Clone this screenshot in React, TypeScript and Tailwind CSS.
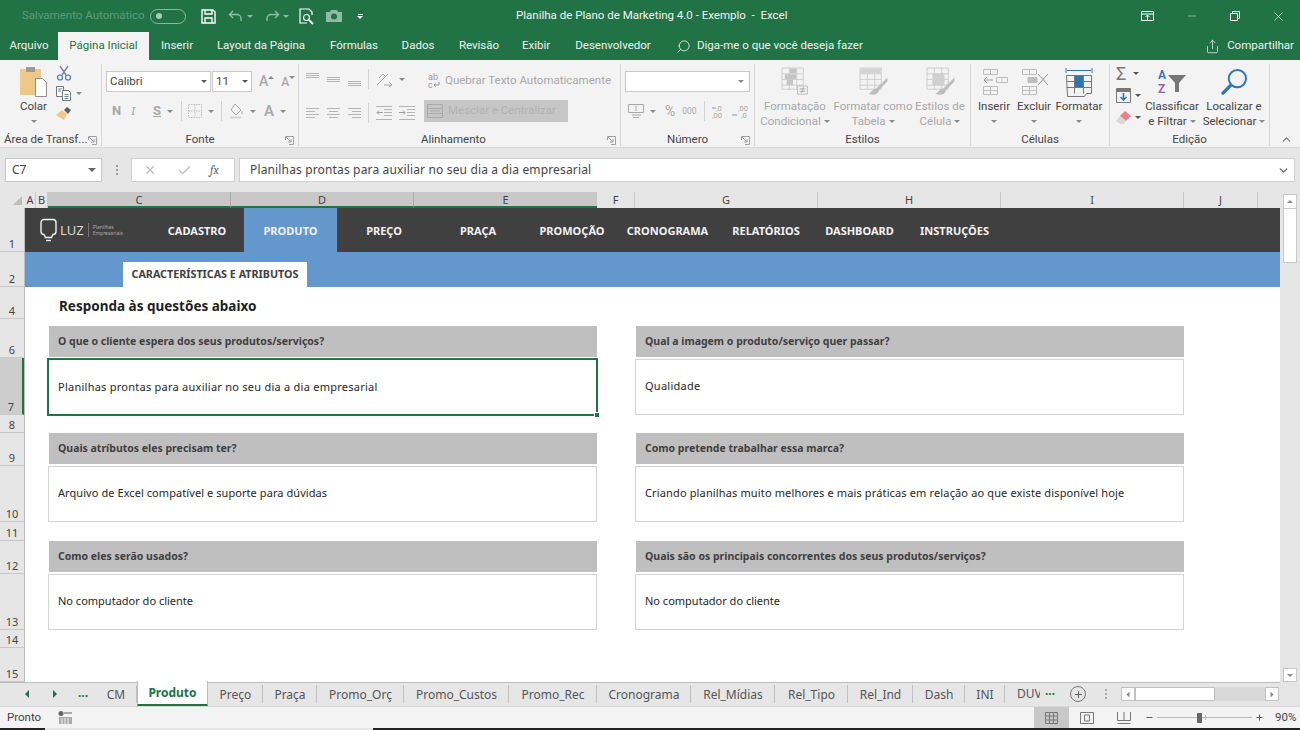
import { ChevronDown, Check, Minus, Plus, Search, Share, X } from 'lucide-react';
import type { ReactNode } from 'react';

const tabs = ['Inserir', 'Layout da Página', 'Fórmulas', 'Dados', 'Revisão', 'Exibir', 'Desenvolvedor'];
const tabWidths = ['w-[56px]', 'w-[112px]', 'w-[74px]', 'w-[54px]', 'w-[68px]', 'w-[46px]', 'w-[108px]'];

const nav = [
  { label: 'CADASTRO', w: 'w-[94px]' },
  { label: 'PRODUTO', w: 'w-[93px]', active: true },
  { label: 'PREÇO', w: 'w-[94px]' },
  { label: 'PRAÇA', w: 'w-[94px]' },
  { label: 'PROMOÇÃO', w: 'w-[94px]' },
  { label: 'CRONOGRAMA', w: 'w-[97px]' },
  { label: 'RELATÓRIOS', w: 'w-[100px]' },
  { label: 'DASHBOARD', w: 'w-[87px]' },
  { label: 'INSTRUÇÕES', w: 'w-[103px]' },
];

const rows = [
  { n: '1', h: 'h-[44px]' },
  { n: '2', h: 'h-[35px]' },
  { n: '4', h: 'h-[32px]' },
  { n: '6', h: 'h-[39px]' },
  { n: '7', h: 'h-[57px]', selected: true },
  { n: '8', h: 'h-[18px]' },
  { n: '9', h: 'h-[33px]' },
  { n: '10', h: 'h-[56px]' },
  { n: '11', h: 'h-[19px]' },
  { n: '12', h: 'h-[33px]' },
  { n: '13', h: 'h-[56px]' },
  { n: '14', h: 'h-[18px]' },
  { n: '15', h: 'h-[34px]' },
];

const columns = [
  { n: 'F', w: 'w-[38px]' },
  { n: 'G', w: 'w-[183px]' },
  { n: 'H', w: 'w-[183px]' },
  { n: 'I', w: 'w-[183px]' },
  { n: 'J', w: 'w-[74px]' },
];

const cards = [
  { title: 'O que o cliente espera dos seus produtos/serviços?', text: 'Planilhas prontas para auxiliar no seu dia a dia empresarial', track: 'tracking-[0.25px]' },
  { title: 'Qual a imagem o produto/serviço quer passar?', text: 'Qualidade', track: 'tracking-[0.25px]' },
  { title: 'Quais atríbutos eles precisam ter?', text: 'Arquivo de Excel compatível e suporte para dúvidas', track: 'tracking-[0.07px]' },
  { title: 'Como pretende trabalhar essa marca?', text: 'Criando planilhas muito melhores e mais práticas em relação ao que existe disponível hoje', track: 'tracking-[0.14px]' },
  { title: 'Como eles serão usados?', text: 'No computador do cliente', track: 'tracking-normal' },
  { title: 'Quais são os principais concorrentes dos seus produtos/serviços?', text: 'No computador do cliente', track: 'tracking-normal' },
];

const sheets = [
  { n: 'CM', w: 'w-[42px]' },
  { n: 'Produto', w: 'w-[71px]', active: true },
  { n: 'Preço', w: 'w-[55px]' },
  { n: 'Praça', w: 'w-[54px]' },
  { n: 'Promo_Orç', w: 'w-[87px]' },
  { n: 'Promo_Custos', w: 'w-[105px]' },
  { n: 'Promo_Rec', w: 'w-[88px]' },
  { n: 'Cronograma', w: 'w-[94px]' },
  { n: 'Rel_Mídias', w: 'w-[84px]' },
  { n: 'Rel_Tipo', w: 'w-[73px]' },
  { n: 'Rel_Ind', w: 'w-[65px]' },
  { n: 'Dash', w: 'w-[52px]' },
  { n: 'INI', w: 'w-[40px]' },
];

function Caret({ className = '' }: { className?: string }) {
  return <span className={`inline-block w-0 h-0 border-x-[3px] border-x-transparent border-t-[3px] border-t-[#8a8a8a] ${className}`} />;
}

function VSep({ className = '' }: { className?: string }) {
  return <span className={`inline-block w-px h-[20px] bg-[#d4d4d4] ${className}`} />;
}

function Launcher() {
  return (
    <svg width="9" height="9" viewBox="0 0 9 9" fill="none" stroke="#a0a0a0" strokeWidth="1">
      <path d="M.5 4V.5H8.5V8.5H4" />
      <path d="M1 1l5 5M6 3v3H3" />
    </svg>
  );
}

function Lines({ kind }: { kind: 'top' | 'mid' | 'bot' | 'left' | 'center' | 'right' }) {
  if (kind === 'top' || kind === 'mid' || kind === 'bot') {
    const y = kind === 'top' ? 1 : kind === 'mid' ? 5 : 9;
    return (
      <svg width="15" height="14" viewBox="0 0 15 14" stroke="#b4b4b4">
        <path d={`M1 ${y + 0.5}h13M1 ${y + 2.5}h13M1 ${y + 4.5}h13`} />
      </svg>
    );
  }
  const d = kind === 'left' ? 'M1 2.5h13M1 5.5h9M1 8.5h13M1 11.5h9' : kind === 'center' ? 'M1 2.5h13M3 5.5h9M1 8.5h13M3 11.5h9' : 'M1 2.5h13M5 5.5h9M1 8.5h13M5 11.5h9';
  return (
    <svg width="15" height="14" viewBox="0 0 15 14" stroke="#b4b4b4">
      <path d={d} />
    </svg>
  );
}

function Indent({ flip = false }: { flip?: boolean }) {
  return (
    <svg width="16" height="14" viewBox="0 0 16 14" fill="none" stroke="#b4b4b4">
      <path d="M8 3.5h8M8 6.5h8M8 9.5h8M0 13.5h16M0 .5h16" />
      {flip ? <path d="M0 6.500h6M4 4.500l2 2-2 2" stroke="#a0a0a0" /> : <path d="M1 6.500h6M3 4.500l-2 2 2 2" stroke="#a0a0a0" />}
    </svg>
  );
}

function PasteIcon() {
  return (
    <svg width="28" height="32" viewBox="0 0 28 32">
      <rect x="0" y="3" width="21" height="26" rx="1" fill="#eec88a" />
      <rect x="6" y="1" width="9" height="5" fill="#9a9a9a" />
      <path d="M15.5 12.5h7l4 4v14h-11z" fill="#fff" stroke="#8e8e8e" />
    </svg>
  );
}

function Scissors() {
  return (
    <svg width="16" height="16" viewBox="0 0 16 16" fill="none">
      <path d="M4 1l6 9M12 1L6 10" stroke="#7d8590" strokeWidth="1.4" />
      <circle cx="4" cy="12.5" r="2.5" stroke="#4a78a8" strokeWidth="1.2" />
      <circle cx="12" cy="12.5" r="2.5" stroke="#4a78a8" strokeWidth="1.2" />
    </svg>
  );
}

function CopyIcon() {
  return (
    <svg width="16" height="15" viewBox="0 0 16 15" fill="#fff" stroke="#777">
      <path d="M.5.5h7v10h-7z" />
      <path d="M6.5 4.500h6l2 2v8h-8z" />
      <path d="M2 3h4M2 5h3M8.500 8.500h4M8.500 10.500h4M8.500 12.500h4" stroke="#5b87b5" />
    </svg>
  );
}

function Brush() {
  return (
    <svg width="16" height="15" viewBox="0 0 16 15">
      <path d="M6 4l5 4-3 6-8-5z" fill="#eec88a" />
      <path d="M8 4l3-3 4 3-3 4z" fill="#5f5f5f" />
    </svg>
  );
}

function Grid({ icon }: { icon: 'cond' | 'table' | 'cell' }) {
  return (
    <svg width="31" height="31" viewBox="0 0 38 38" fill="none">
      <path d="M2.500 2.500h26v26h-26zM2.500 9.500h26M2.500 16.500h26M2.500 23.500h26M11.500 2.500v26M20.500 2.500v26" stroke="#c8c8c8" />
      {icon === 'cond' && <path d="M12 3h8v6h-8zM6 10h14v6H6zM8 17h8v6H8z" fill="#c4c4c4" />}
      {icon === 'cond' && <path d="M21.500 24.500h12v10h-12z" fill="#f3f3f3" stroke="#b4b4b4" />}
      {icon === 'cond' && <path d="M24 28h7M24 31h7M29 26l-3 7" stroke="#9c9c9c" />}
      {icon === 'table' && <path d="M3 3h25v6H3z" fill="#d4d4d4" />}
      {icon === 'cell' && <path d="M9 9h15v15H9z" fill="#d0d0d0" />}
      {icon !== 'cond' && <path d="M36 14L24 26l-2 2c-4 0-5 4-9 6 6 3 12 1 13-5l10-10z" fill="#bdbdbd" />}
    </svg>
  );
}

function RibbonGroup({ w, label, labelClass = 'justify-center', launcher = false, children }: { w: string; label: string; labelClass?: string; launcher?: boolean; children: ReactNode }) {
  return (
    <div className={`${w} shrink-0 h-[82px] border-r border-[#d6d6d6] flex flex-col`}>
      <div className="h-[70px] flex">{children}</div>
      <div className={`relative flex-1 flex items-center text-[11.5px] leading-none text-[#444] ${labelClass}`}>
        <span className="whitespace-nowrap">{label}</span>
        {launcher && (
          <span className="absolute right-[4px] top-[2px]">
            <Launcher />
          </span>
        )}
      </div>
    </div>
  );
}

function BigBtn({ w, lines, icon, caretLine = false, muted = false }: { w: string; lines: string[]; icon: ReactNode; caretLine?: boolean; muted?: boolean }) {
  return (
    <div className={`${w} shrink-0 flex flex-col items-center text-[11.5px] leading-[15px] ${muted ? 'text-[#a8a8a8]' : 'text-[#444]'}`}>
      <div className="h-[35px] flex items-center justify-center">{icon}</div>
      {lines.map((l, i) => (
        <span key={l} className="whitespace-nowrap">
          {l}
          {i === lines.length - 1 && !caretLine && <Caret className="ml-[3px] mb-[2px]" />}
        </span>
      ))}
      {caretLine && <Caret className="mt-[6px]" />}
    </div>
  );
}

function Card({ title, text, track, selected }: { title: string; text: string; track: string; selected?: boolean }) {
  return (
    <div className="relative h-[89px]">
      <div className="h-[31px] ml-px bg-[#bfbfbf] flex items-center pl-[9px] text-[10.5px] font-bold text-[#404040]">{title}</div>
      <div className={`flex items-center bg-white text-[11px] text-[#262626] ${track} ${selected ? 'h-[58px] -mx-px mt-px border-2 border-[#217346] pl-[9px]' : 'h-[56px] mt-[2px] border border-[#d4d4d4] pl-[9px] pb-px'}`}>{text}</div>
      {selected && <span className="absolute -right-[3px] -bottom-[3px] w-[6px] h-[6px] bg-[#217346] border border-white" />}
    </div>
  );
}

export default function App() {
  return (
    <div className="w-[1300px] h-[730px] overflow-hidden bg-[#e6e6e6] flex flex-col text-[#444] [font-family:'Roboto',sans-serif]">
      {/* title bar */}
      <div className="h-[32px] shrink-0 bg-[#217346] flex items-center text-white">
        <span className="ml-[22px] w-[128px] text-[11.5px] text-[#5d9a7b] whitespace-nowrap">Salvamento Automático</span>
        <span className="w-[36px] h-[15px] rounded-full border border-[#8cb8a0] flex items-center pl-[5px]">
          <span className="w-[6px] h-[6px] rounded-full bg-[#a9cbb8]" />
        </span>
        <svg className="ml-[15px]" width="15" height="15" viewBox="0 0 15 15" fill="none" stroke="#fff" strokeWidth="1.4">
          <path d="M1 1h11l2 2v11H1z" />
          <path d="M4 1v4h7V1M4 14V9h7v5" />
        </svg>
        <svg className="ml-[12px]" width="16" height="14" viewBox="0 0 16 14" fill="none" stroke="#8fbaa3" strokeWidth="1.4">
          <path d="M5 2L1.500 5.500 5 9M2 5.500h7a4 4 0 0 1 4 4V12" />
        </svg>
        <Caret className="ml-[3px] !border-t-[#8fbaa3]" />
        <svg className="ml-[11px]" width="16" height="14" viewBox="0 0 16 14" fill="none" stroke="#8fbaa3" strokeWidth="1.4">
          <path d="M11 2l3.500 3.500L11 9M14 5.500H7a4 4 0 0 0-4 4V12" />
        </svg>
        <Caret className="ml-[3px] !border-t-[#8fbaa3]" />
        <svg className="ml-[10px]" width="16" height="17" viewBox="0 0 16 17" fill="none" stroke="#fff" strokeWidth="1.2">
          <path d="M10 1H1v14h7M10 1l3 3v3" />
          <circle cx="7.5" cy="9.5" r="3" />
          <path d="M10 12l4 4" strokeWidth="1.8" />
        </svg>
        <svg className="ml-[11px]" width="16" height="12" viewBox="0 0 16 12" fill="#8fbaa3">
          <path d="M0 2h4l1-2h6l1 2h4v10H0z" />
          <circle cx="8" cy="6.5" r="3" fill="#217346" />
        </svg>
        <span className="ml-[15px] flex flex-col items-center gap-[1px]">
          <span className="w-[5px] h-px bg-white" />
          <Caret className="!border-t-white" />
        </span>
        <span className="ml-[153px] text-[11.5px] text-[#f2f2f2] whitespace-nowrap">Planilha de Plano de Marketing 4.0 - Exemplo&nbsp; -&nbsp; Excel</span>
        <div className="ml-auto flex items-center">
          <svg width="13" height="10" viewBox="0 0 13 10" fill="none" stroke="#fff">
            <path d="M.5.500h12v9H.5zM.5 3h12M6.500 9V4M4.500 6l2-2 2 2" />
          </svg>
          <Minus className="ml-[32px] text-white" size={12} strokeWidth={1} />
          <svg className="ml-[32px]" width="10" height="10" viewBox="0 0 10 10" fill="none" stroke="#fff">
            <path d="M.5 2.500h7v7h-7zM2.500 2.500v-2h7v7h-2" />
          </svg>
          <X className="ml-[31px] mr-[14px] text-white" size={15} strokeWidth={1} />
        </div>
      </div>

      {/* tabs */}
      <div className="h-[28px] shrink-0 bg-[#217346] flex items-end text-[11.5px] text-[#f0f0f0]">
        <div className="w-[58px] h-[28px] flex items-center justify-center">Arquivo</div>
        <div className="w-[91px] h-[28px] bg-[#f3f3f3] flex items-center justify-center text-[#217346]">Página Inicial</div>
        {tabs.map((t, i) => (
          <div key={t} className={`${tabWidths[i]} h-[28px] flex items-center justify-center whitespace-nowrap`}>
            {t}
          </div>
        ))}
        <div className="h-[28px] ml-[9px] flex items-center">
          <Search size={15} strokeWidth={1.2} className="-scale-x-100 text-white" />
          <span className="ml-[6px]">Diga-me o que você deseja fazer</span>
        </div>
        <div className="h-[28px] ml-auto mr-[6px] flex items-center">
          <Share size={15} strokeWidth={1.2} />
          <span className="ml-[7px]">Compartilhar</span>
        </div>
      </div>

      {/* ribbon */}
      <div className="h-[88px] shrink-0 bg-[#f3f3f3] border-b border-[#d8d8d8] pt-[4px] flex relative">
        <RibbonGroup w="w-[102px]" label="Área de Transf..." labelClass="pl-[4px]" launcher>
          <div className="w-[55px] flex flex-col items-center pl-[12px] text-[11.5px] text-[#444]">
            <div className="h-[34px] mt-[1px] flex items-center">
              <PasteIcon />
            </div>
            <span className="leading-[15px]">Colar</span>
            <Caret className="mt-[6px]" />
          </div>
          <div className="flex flex-col gap-[5px] pt-[1px] pl-[1px]">
            <Scissors />
            <span className="flex items-center gap-[4px]">
              <CopyIcon />
              <Caret />
            </span>
            <Brush />
          </div>
        </RibbonGroup>

        <RibbonGroup w="w-[197px]" label="Fonte" launcher>
          <div className="pl-[4px] pt-[7px] flex flex-col">
            <div className="flex items-center">
              <div className="w-[105px] h-[21px] bg-white border border-[#c8c8c8] flex items-center justify-between px-[3px] text-[11.5px] text-[#444]">
                Calibri <Caret className="!border-t-[#555]" />
              </div>
              <div className="w-[40px] h-[21px] ml-px bg-white border border-[#c8c8c8] flex items-center justify-between px-[3px] text-[11.5px] text-[#444]">
                11 <Caret className="!border-t-[#555]" />
              </div>
              <span className="ml-[7px] text-[14px] text-[#a8a8a8] font-medium">A</span>
              <Caret className="rotate-180 mb-[8px]" />
              <span className="ml-[7px] text-[12px] text-[#a8a8a8] font-medium">A</span>
              <Caret className="mb-[8px]" />
            </div>
            <div className="flex items-center h-[20px] mt-[9px] text-[#a8a8a8] font-bold text-[13px]">
              <span className="ml-[6px] w-[19px]">N</span>
              <span className="w-[22px] italic font-serif font-normal">I</span>
              <span className="w-[14px] underline">S</span>
              <Caret />
              <VSep className="ml-[8px]" />
              <svg className="ml-[6px]" width="14" height="14" viewBox="0 0 14 14" fill="none" stroke="#bdbdbd">
                <path d="M.5.500h13v13H.5zM7 .5v13M.5 7h13" strokeDasharray="1.5 1" />
              </svg>
              <Caret className="ml-[6px]" />
              <VSep className="ml-[7px]" />
              <svg className="ml-[7px]" width="15" height="16" viewBox="0 0 15 16" fill="none" stroke="#a8a8a8">
                <path d="M6 1l6 6-5 5-5-5zM13 8v3" />
                <path d="M1 14.500h11" stroke="#d4d4d4" strokeWidth="2" />
              </svg>
              <Caret className="ml-[6px]" />
              <span className="ml-[8px] text-[15px] font-semibold">A</span>
              <Caret className="ml-[6px]" />
            </div>
          </div>
        </RibbonGroup>

        <RibbonGroup w="w-[322px]" label="Alinhamento" labelClass="pl-[122px]" launcher>
          <div className="w-[122px] pl-[6px] pt-[5px] flex flex-col">
            <div className="flex items-center gap-[6px]">
              <Lines kind="top" />
              <Lines kind="mid" />
              <Lines kind="bot" />
              <VSep />
              <svg className="ml-[1px]" width="17" height="15" viewBox="0 0 17 15" fill="none" stroke="#a8a8a8">
                <path d="M1 13L12 2M3 6l4-4 3 3M8 13h8M13 10l3 3-3 2" />
              </svg>
              <Caret />
            </div>
            <div className="flex items-center gap-[6px] mt-[14px]">
              <Lines kind="left" />
              <Lines kind="center" />
              <Lines kind="right" />
              <VSep />
              <span className="ml-[1px]">
                <Indent />
              </span>
              <span className="ml-[1px]">
                <Indent flip />
              </span>
            </div>
          </div>
          <div className="pt-[7px] pl-[3px] flex flex-col">
            <div className="flex items-center h-[20px] text-[11.5px] text-[#a8a8a8] whitespace-nowrap">
              <svg className="ml-[4px] mr-[4px]" width="13" height="16" viewBox="0 0 13 16" fill="#9a9a9a">
                <text x="0" y="7" fontSize="9">ab</text>
                <text x="0" y="15" fontSize="9">c</text>
                <path d="M11 9v3H6M8 10.500L6 12l2 1.500" fill="none" stroke="#9a9a9a" />
              </svg>
              Quebrar Texto Automaticamente
            </div>
            <div className="w-[144px] h-[22px] mt-[9px] bg-[#c6c6c6] flex items-center pl-[3px] text-[11.5px] text-[#b2b2b2] whitespace-nowrap">
              <svg className="mr-[5px]" width="16" height="14" viewBox="0 0 16 14" fill="none" stroke="#a9a9a9">
                <path d="M.5.500h15v13H.5zM.5 4.500h15M.5 9.500h15M3 7h10" />
              </svg>
              Mesclar e Centralizar
            </div>
          </div>
        </RibbonGroup>

        <RibbonGroup w="w-[134px]" label="Número" launcher>
          <div className="pl-[4px] pt-[7px] flex flex-col">
            <div className="w-[125px] h-[21px] bg-white border border-[#c8c8c8] flex items-center justify-end pr-[5px]">
              <Caret />
            </div>
            <div className="flex items-center h-[20px] mt-[9px] text-[#a8a8a8]">
              <svg className="ml-[3px]" width="16" height="15" viewBox="0 0 16 15" fill="none" stroke="#a8a8a8">
                <path d="M.5.500h15v8H.5zM4 11h9M5 13.500h6M8 2v5" />
              </svg>
              <Caret className="ml-[6px]" />
              <span className="ml-[9px] text-[14px]">%</span>
              <span className="ml-[7px] text-[8.5px]">000</span>
              <VSep className="ml-[7px]" />
              <svg className="ml-[7px]" width="38" height="15" viewBox="0 0 38 15" fill="#a8a8a8">
                <text x="4" y="6.500" fontSize="7.500">,0</text>
                <text x="0" y="14" fontSize="7.500">,00</text>
                <text x="26" y="6.500" fontSize="7.500">,00</text>
                <text x="29" y="14" fontSize="7.500">,0</text>
                <path d="M4 4H0M20 11h5" fill="none" stroke="#6f9fc9" />
              </svg>
            </div>
          </div>
        </RibbonGroup>

        <RibbonGroup w="w-[216px]" label="Estilos">
          <BigBtn w="w-[80px]" lines={['Formatação', 'Condicional']} icon={<Grid icon="cond" />} muted />
          <BigBtn w="w-[76px]" lines={['Formatar como', 'Tabela']} icon={<Grid icon="table" />} muted />
          <BigBtn w="w-[58px]" lines={['Estilos de', 'Célula']} icon={<Grid icon="cell" />} muted />
        </RibbonGroup>

        <RibbonGroup w="w-[139px]" label="Células">
          <BigBtn
            w="w-[46px]"
            lines={['Inserir']}
            caretLine
            icon={
              <svg width="28" height="27" viewBox="0 0 28 27" fill="none" stroke="#bdbdbd">
                <path d="M3.500 1.500h14v5h-14zM10.500 1.500v5M3.500 18.500h14v8h-14zM10.500 18.500v8M3.500 22.500h14M16.500 9.500h11v5h-11zM22 9.500v5" />
                <path d="M13 12H4M7 9l-3 3 3 3" stroke="#9a9a9a" />
              </svg>
            }
          />
          <BigBtn
            w="w-[34px]"
            lines={['Excluir']}
            caretLine
            icon={
              <svg width="30" height="27" viewBox="0 0 30 27" fill="none" stroke="#bdbdbd">
                <path d="M3.500 1.500h14v5h-14zM10.500 1.500v5M3.500 18.500h14v8h-14zM10.500 18.500v8M3.500 22.500h14" />
                <path d="M9 9.500h9v5H9z" fill="#bdbdbd" />
                <path d="M19 6l10 11M29 6L19 17" stroke="#9a9a9a" />
              </svg>
            }
          />
          <BigBtn
            w="w-[56px]"
            lines={['Formatar']}
            caretLine
            icon={
              <svg width="28" height="32" viewBox="0 0 28 32" fill="none">
                <path d="M1 2v5M27 2v5M2 4.500h24" stroke="#2e75b6" />
                <path d="M1.500 9.500h25v18h-5l-2 3h-17zM1.500 15.500h25M1.500 21.500h25M9.500 9.500v18M18.500 9.500v18" stroke="#777" />
                <path d="M10 10h8v11h-8z" fill="#2e75b6" />
              </svg>
            }
          />
        </RibbonGroup>

        <RibbonGroup w="w-[160px]" label="Edição">
          <div className="w-[34px] pl-[6px] flex flex-col gap-[3px]">
            <span className="flex items-center gap-[3px] h-[19px]">
              <span className="w-[14px] text-[18px] leading-none text-[#777]">Σ</span>
              <Caret className="!border-t-[#555]" />
            </span>
            <span className="flex items-center gap-[4px] h-[19px]">
              <svg width="15" height="15" viewBox="0 0 15 15" fill="none">
                <path d="M.5.500h14v14H.5z" stroke="#777" />
                <path d="M1 1h13v3H1z" fill="#777" />
                <path d="M7.500 5v7M4.500 9l3 3 3-3" stroke="#2e75b6" strokeWidth="1.6" />
              </svg>
              <Caret className="!border-t-[#555]" />
            </span>
            <span className="flex items-center gap-[4px] h-[19px]">
              <svg width="15" height="13" viewBox="0 0 15 13">
                <path d="M9 0l6 5-5 5-6-5z" fill="#ee7d8e" />
                <path d="M4 5l6 5-2 3H4L0 10z" fill="#d8d8d8" />
              </svg>
              <Caret className="!border-t-[#555]" />
            </span>
          </div>
          <BigBtn
            w="w-[56px]"
            lines={['Classificar', 'e Filtrar']}
            icon={
              <svg width="30" height="28" viewBox="0 0 30 28">
                <text x="1" y="11" fontSize="12" fontWeight="600" fill="#2e75b6">A</text>
                <text x="1" y="25" fontSize="12" fontWeight="600" fill="#8e5fb5">Z</text>
                <path d="M11 7h18l-7 8v9h-4v-9z" fill="#777" />
              </svg>
            }
          />
          <BigBtn
            w="w-[68px]"
            lines={['Localizar e', 'Selecionar']}
            icon={
              <svg width="27" height="27" viewBox="0 0 28 28" fill="none" stroke="#2e75b6">
                <circle cx="17" cy="11" r="9" strokeWidth="2" />
                <path d="M10 18L2 26" strokeWidth="3.4" strokeLinecap="round" />
              </svg>
            }
          />
        </RibbonGroup>
        <ChevronDown size={13} className="absolute right-[7px] bottom-[1px] rotate-180 text-[#777]" />
      </div>

      {/* formula bar */}
      <div className="h-[44px] shrink-0 flex items-start pl-[5px] pr-[5px] pt-[10px] [font-family:'Noto_Sans',sans-serif]">
        <div className="w-[97px] h-[24px] bg-white border border-[#c8c8c8] flex items-center justify-between pl-[6px] pr-[5px] text-[12px] text-[#444]">
          C7 <Caret className="!border-t-[#666] !border-x-[4px] !border-t-[4px]" />
        </div>
        <div className="w-[29px] h-[24px] flex flex-col items-center justify-center gap-[2px]">
          <span className="w-[2px] h-[2px] bg-[#999]" />
          <span className="w-[2px] h-[2px] bg-[#999]" />
          <span className="w-[2px] h-[2px] bg-[#999]" />
        </div>
        <div className="w-[104px] h-[24px] bg-white border border-[#d0d0d0] flex items-center text-[#bdbdbd]">
          <X size={14} className="ml-[11px]" />
          <Check size={15} className="ml-[20px]" />
          <span className="ml-[18px] text-[12px] italic font-serif text-[#666]">fx</span>
        </div>
        <div className="ml-[4px] flex-1 h-[24px] bg-white border border-[#d0d0d0] flex items-center justify-between pl-[10px] pr-[4px] text-[12px] tracking-[0.15px] text-[#444]">
          Planilhas prontas para auxiliar no seu dia a dia empresarial
          <ChevronDown size={13} className="text-[#666]" strokeWidth={2.5} />
        </div>
      </div>

      {/* grid area with the vertical scrollbar beside it */}
      <div className="h-[490px] shrink-0 flex [font-family:'Noto_Sans',sans-serif]">
        <div className="w-[1280px] shrink-0 flex flex-col">
          <div className="h-[16px] shrink-0 flex text-[11px] leading-[15px] text-[#444]">
            <div className="w-[25px] relative">
              <span className="absolute right-[3px] bottom-[3px] w-0 h-0 border-l-[9px] border-l-transparent border-b-[9px] border-b-[#bdbdbd]" />
            </div>
            <div className="w-[11px] border-r border-[#c8c8c8] text-center">A</div>
            <div className="w-[12px] border-r border-[#c8c8c8] text-center">B</div>
            <div className="w-[183px] bg-[#c8c8c8] border-b-2 border-[#217346] border-r border-r-[#aaa] text-center">C</div>
            <div className="w-[183px] bg-[#c8c8c8] border-b-2 border-[#217346] border-r border-r-[#aaa] text-center">D</div>
            <div className="w-[183px] bg-[#c8c8c8] border-b-2 border-[#217346] text-center">E</div>
            {columns.map((c) => (
              <div key={c.n} className={`${c.w} border-r border-[#c8c8c8] text-center`}>
                {c.n}
              </div>
            ))}
          </div>
          <div className="flex-1 flex border-b border-[#bdbdbd]">
            <div className="w-[25px] shrink-0 flex flex-col border-r border-[#bdbdbd]">
              {rows.map((r) => (
                <div key={r.n} className={`${r.h} flex items-end justify-center text-[11px] leading-[15px] border-b border-[#c8c8c8] text-[#444] ${r.selected ? 'bg-[#cdcdcd] border-r-2 border-r-[#217346]' : ''}`}>
                  {r.n}
                </div>
              ))}
            </div>
            <div className="w-[1255px] shrink-0 bg-white flex flex-col">
              <div className="h-[44px] bg-[#404040] flex text-[11px] font-bold text-[#f2f2f2]">
                <div className="w-[125px] pl-[15px] flex items-center">
                  <svg width="17" height="25" viewBox="0 0 17 25" fill="none" stroke="#f2f2f2">
                    <path d="M4 1.500h9a3 3 0 0 1 3 3v9a3 3 0 0 1-3 3l-1.500 3h-6L4 16.500a3 3 0 0 1-3-3v-9a3 3 0 0 1 3-3z" strokeWidth="1.4" />
                    <path d="M6 22.500h5" strokeWidth="1.4" />
                  </svg>
                  <span className="ml-[3px] text-[13px] leading-none font-normal text-[#d9d9d9]">LUZ</span>
                  <span className="ml-[4px] w-px h-[14px] bg-[#777]" />
                  <span className="ml-[4px] text-[5px] leading-[6px] font-normal text-[#aaa] whitespace-nowrap">
                    Planilhas
                    <br />
                    Empresariais
                  </span>
                </div>
                {nav.map((n) => (
                  <div key={n.label} className={`${n.w} pt-[2px] flex items-center justify-center whitespace-nowrap ${n.active ? 'bg-[#6497cb]' : ''}`}>
                    {n.label}
                  </div>
                ))}
              </div>
              <div className="h-[35px] bg-[#6497cb] flex items-end pl-[98px]">
                <div className="w-[184px] h-[25px] bg-white flex items-center justify-center text-[10.75px] font-bold text-[#404040] whitespace-nowrap">CARACTERÍSTICAS E ATRIBUTOS</div>
              </div>
              <div className="h-[39px] pl-[34px] pt-[8px] text-[13.5px] leading-[22px] font-bold text-[#1f1f1f]">Responda às questões abaixo</div>
              <div className="grid grid-cols-[549px_549px] grid-rows-[89px_90px_89px] gap-x-[38px] gap-y-[18px] pl-[23px]">
                {cards.map((c, i) => (
                  <Card key={c.title} title={c.title} text={c.text} track={c.track} selected={i === 0} />
                ))}
              </div>
            </div>
          </div>
        </div>
        <div className="ml-[3px] mt-[2px] w-[14px] flex flex-col">
          <div className="h-[15px] bg-white border border-[#c8c8c8] flex items-center justify-center">
            <Caret className="rotate-180" />
          </div>
          <div className="h-[54px] bg-white border-x border-b border-[#c8c8c8]" />
          <div className="mt-auto h-[14px] bg-white border border-[#c8c8c8] flex items-center justify-center">
            <Caret />
          </div>
        </div>
      </div>

      {/* sheet tabs */}
      <div className="h-[24px] shrink-0 flex items-stretch text-[12px] text-[#555] [font-family:'Noto_Sans',sans-serif]">
        <div className="w-[95px] shrink-0 flex items-center text-[#217346]">
          <span className="ml-[25px] w-0 h-0 border-y-[4px] border-y-transparent border-r-[4px] border-r-[#217346]" />
          <span className="ml-[24px] w-0 h-0 border-y-[4px] border-y-transparent border-l-[4px] border-l-[#217346]" />
          <span className="ml-[21px] text-[12px] font-bold leading-none pb-[3px]">...</span>
        </div>
        {sheets.map((s) => (
          <div
            key={s.n}
            className={`${s.w} shrink-0 flex items-center justify-center whitespace-nowrap ${
              s.active ? 'bg-white font-bold text-[#217346] border-b-2 border-[#217346] border-x border-x-[#bdbdbd] -mt-px' : 'relative pt-px after:absolute after:right-0 after:top-[3px] after:bottom-[3px] after:w-px after:bg-[#c0c0c0]'
            }`}
          >
            {s.n}
          </div>
        ))}
        <div className="w-[35px] shrink-0 overflow-hidden flex items-center pl-[12px] whitespace-nowrap">DUV</div>
        <span className="w-[28px] shrink-0 text-[#217346] font-bold text-[12px] pl-[5px] leading-[18px]">...</span>
        <span className="ml-[2px] w-[16px] h-[16px] mt-[4px] rounded-full border border-[#777] flex items-center justify-center shrink-0">
          <Plus size={11} strokeWidth={2} />
        </span>
        <div className="ml-[19px] flex flex-col justify-center gap-[2px]">
          <span className="w-[2px] h-[2px] bg-[#aaa]" />
          <span className="w-[2px] h-[2px] bg-[#aaa]" />
          <span className="w-[2px] h-[2px] bg-[#aaa]" />
        </div>
        <div className="ml-[14px] w-[158px] h-[14px] mt-[5px] flex bg-[#d8d8d8]">
          <div className="w-[14px] bg-white border border-[#c0c0c0] flex items-center justify-center">
            <Caret className="rotate-90" />
          </div>
          <div className="w-[80px] bg-white border border-[#c0c0c0]" />
          <div className="ml-auto w-[14px] bg-white border border-[#c0c0c0] flex items-center justify-center">
            <Caret className="-rotate-90" />
          </div>
        </div>
      </div>

      {/* status bar */}
      <div className="h-[22px] shrink-0 bg-[#f3f3f3] border-t border-[#d8d8d8] flex items-center text-[11.5px] text-[#444]">
        <div className="w-[1034px] shrink-0 flex items-center">
          <span className="ml-[7px] w-[51px]">Pronto</span>
          <svg width="14" height="13" viewBox="0 0 14 13" fill="none">
            <circle cx="3" cy="2.500" r="2.500" fill="#666" />
            <path d="M6 1h8v2H6zM1 6h13v7H1z" fill="#aaa" />
            <path d="M4 7v6M7 7v6M10 7v6" stroke="#f3f3f3" />
          </svg>
        </div>
        <div className="w-[35px] h-[21px] bg-[#c8c8c8] flex items-center justify-center">
          <svg width="13" height="12" viewBox="0 0 13 12" fill="none" stroke="#777">
            <path d="M.5.500h12v11H.5zM.5 4h12M.5 8h12M4.500.5v11M8.500.5v11" />
          </svg>
        </div>
        <svg className="ml-[11px]" width="14" height="12" viewBox="0 0 14 12" fill="none" stroke="#777">
          <path d="M.5.500h13v11H.5zM4.500 3h5v6h-5z" />
        </svg>
        <svg className="ml-[23px]" width="14" height="12" viewBox="0 0 14 12" fill="none" stroke="#777">
          <path d="M.5 0v8.500h13V0M7 0v8.500M.5 11.500h13" />
        </svg>
        <Minus size={9} strokeWidth={2.5} className="ml-[14px] text-[#555]" />
        <div className="ml-[3px] w-[95px] h-px bg-[#b8b8b8] flex items-center pl-[40px]">
          <span className="w-[5px] h-[10px] bg-[#666]" />
          <span className="ml-[3px] w-px h-[5px] bg-[#b8b8b8]" />
        </div>
        <Plus size={9} strokeWidth={2.5} className="ml-[3px] text-[#555]" />
        <span className="ml-[11px]">90%</span>
      </div>
      <div className="h-[2px] shrink-0 flex">
        <span className="w-[45px] bg-[#222]" />
        <span className="w-[328px] bg-[#e6e6e6]" />
        <span className="flex-1 bg-[#222]" />
      </div>
    </div>
  );
}
